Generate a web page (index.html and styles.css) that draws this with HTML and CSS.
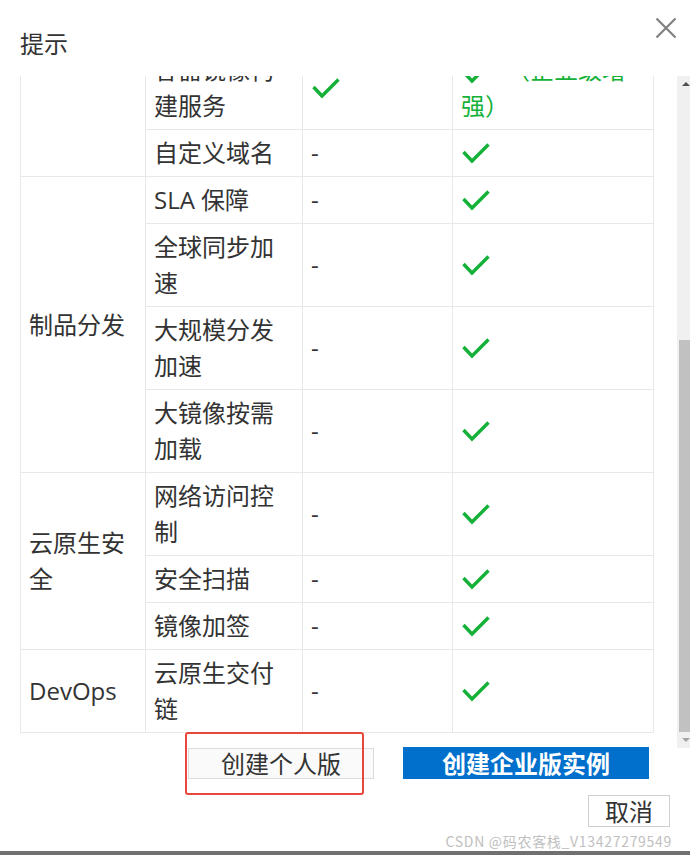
FILE: index.html
```html
<!DOCTYPE html>
<html lang="zh-CN">
<head>
<meta charset="utf-8">
<title>提示</title>
<link rel="stylesheet" href="styles.css">
</head>
<body>
<div class="dialog">
  <div class="header">
    <div class="title">提示</div>
    <svg class="close" width="22" height="22" viewBox="0 0 22 22"><path d="M1.5 1.5 L20.5 20.5 M20.5 1.5 L1.5 20.5" stroke="#808080" stroke-width="2.2" fill="none"/></svg>
  </div>
  <div class="body">
    <div class="viewport">
      <table class="grid">
        <colgroup><col class="c1"><col class="c2"><col class="c3"><col class="c4"></colgroup>
        <tr><td rowspan="2"></td><td>容器镜像构建服务</td><td><svg class="ok" width="28" height="22" viewBox="0 0 28 22"><polyline points="1.5,10 10,19 26.5,2.5" fill="none" stroke="#14b037" stroke-width="3.4"/></svg></td><td class="green"><svg class="ok-inline" width="28" height="22" viewBox="0 0 28 22"><polyline points="1.5,10 10,19 26.5,2.5" fill="none" stroke="#14b037" stroke-width="3.4"/></svg>（企业级增强）</td></tr>
        <tr><td>自定义域名</td><td>-</td><td><svg class="ok" width="28" height="22" viewBox="0 0 28 22"><polyline points="1.5,10 10,19 26.5,2.5" fill="none" stroke="#14b037" stroke-width="3.4"/></svg></td></tr>
        <tr><td rowspan="4">制品分发</td><td>SLA 保障</td><td>-</td><td><svg class="ok" width="28" height="22" viewBox="0 0 28 22"><polyline points="1.5,10 10,19 26.5,2.5" fill="none" stroke="#14b037" stroke-width="3.4"/></svg></td></tr>
        <tr><td>全球同步加速</td><td>-</td><td><svg class="ok" width="28" height="22" viewBox="0 0 28 22"><polyline points="1.5,10 10,19 26.5,2.5" fill="none" stroke="#14b037" stroke-width="3.4"/></svg></td></tr>
        <tr><td>大规模分发加速</td><td>-</td><td><svg class="ok" width="28" height="22" viewBox="0 0 28 22"><polyline points="1.5,10 10,19 26.5,2.5" fill="none" stroke="#14b037" stroke-width="3.4"/></svg></td></tr>
        <tr><td>大镜像按需加载</td><td>-</td><td><svg class="ok" width="28" height="22" viewBox="0 0 28 22"><polyline points="1.5,10 10,19 26.5,2.5" fill="none" stroke="#14b037" stroke-width="3.4"/></svg></td></tr>
        <tr><td rowspan="3">云原生安全</td><td>网络访问控制</td><td>-</td><td><svg class="ok" width="28" height="22" viewBox="0 0 28 22"><polyline points="1.5,10 10,19 26.5,2.5" fill="none" stroke="#14b037" stroke-width="3.4"/></svg></td></tr>
        <tr><td>安全扫描</td><td>-</td><td><svg class="ok" width="28" height="22" viewBox="0 0 28 22"><polyline points="1.5,10 10,19 26.5,2.5" fill="none" stroke="#14b037" stroke-width="3.4"/></svg></td></tr>
        <tr><td>镜像加签</td><td>-</td><td><svg class="ok" width="28" height="22" viewBox="0 0 28 22"><polyline points="1.5,10 10,19 26.5,2.5" fill="none" stroke="#14b037" stroke-width="3.4"/></svg></td></tr>
        <tr><td>DevOps</td><td>云原生交付链</td><td>-</td><td><svg class="ok" width="28" height="22" viewBox="0 0 28 22"><polyline points="1.5,10 10,19 26.5,2.5" fill="none" stroke="#14b037" stroke-width="3.4"/></svg></td></tr>
      </table>
    </div>
    <div class="scrollbar">
      <div class="sb-btn"><span class="arrow-up"></span></div>
      <div class="sb-track"><div class="sb-thumb"></div></div>
      <div class="sb-btn"><span class="arrow-down"></span></div>
    </div>
  </div>
  <div class="actions">
    <button class="btn btn-plain">创建个人版</button>
    <button class="btn btn-primary">创建企业版实例</button>
    <div class="mark"></div>
  </div>
  <div class="footer">
    <button class="btn btn-cancel">取消</button>
  </div>
  <div class="watermark">CSDN @码农客栈_V13427279549</div>
  <div class="bottom-bar"></div>
</div>
</body>
</html>
```
FILE: styles.css
```css
* { box-sizing: border-box; }
html, body { margin: 0; padding: 0; background: #fff; }
body {
  font-family: "Open Sans", "Noto Sans CJK SC", sans-serif;
  color: #333;
}
.dialog {
  width: 690px;
  height: 855px;
  display: flex;
  flex-direction: column;
  overflow: hidden;
}
.header {
  height: 76px;
  flex-shrink: 0;
  display: flex;
  justify-content: space-between;
  align-items: flex-start;
}
.title {
  margin: 26px 0 0 20px;
  font-size: 24px;
  line-height: 36px;
  color: #333;
}
.close {
  margin: 17px 13px 0 0;
}
.body {
  height: 671px;
  flex-shrink: 0;
  display: flex;
}
.viewport {
  flex: 1;
  overflow: hidden;
  display: flex;
  flex-direction: column;
  justify-content: flex-end;
  padding: 0 0 14px 20px;
}
.grid {
  flex-shrink: 0;
  width: 633px;
  table-layout: fixed;
  border-collapse: collapse;
  font-size: 24px;
  line-height: 36px;
  color: #333;
}
.c1 { width: 125px; }
.c2 { width: 157px; }
.c3 { width: 150px; }
.c4 { width: 201px; }
.grid td {
  border: 1px solid #e8e8e8;
  padding: 5px 8px;
  vertical-align: middle;
}
.ok { display: block; margin-left: 1px; }
.ok-inline { vertical-align: middle; margin: 0 16px 0 1px; }
.green { color: #14b037; }
.scrollbar {
  width: 13px;
  height: 672px;
  background: #f0f0f0;
  display: flex;
  flex-direction: column;
  flex-shrink: 0;
}
.sb-btn {
  height: 16px;
  flex-shrink: 0;
  display: flex;
  align-items: center;
  justify-content: center;
  padding-left: 4px;
}
.arrow-up {
  width: 0; height: 0;
  border-left: 4px solid transparent;
  border-right: 4px solid transparent;
  border-bottom: 4px solid #505050;
}
.arrow-down {
  width: 0; height: 0;
  border-left: 4px solid transparent;
  border-right: 4px solid transparent;
  border-top: 4px solid #a3a3a3;
}
.sb-track {
  flex: 1;
  display: flex;
  flex-direction: column;
  justify-content: flex-end;
}
.sb-thumb {
  height: 392px;
  margin-left: 2px;
  background: #c1c1c1;
}
.actions {
  position: relative;
  height: 32px;
  flex-shrink: 0;
  display: flex;
  align-items: center;
  padding-left: 188px;
  gap: 29px;
}
.btn {
  font-family: "Noto Sans CJK SC", sans-serif;
  font-size: 24px;
  line-height: 28px;
  padding: 0;
  margin: 0;
  border-radius: 0;
  cursor: pointer;
}
.btn-plain {
  width: 186px;
  height: 31px;
  background: #fafafa;
  border: 1px solid #dcdcdc;
  color: #333;
}
.btn-primary {
  width: 246px;
  height: 32px;
  background: #0070cc;
  border: none;
  color: #fff;
  font-weight: 600;
}
.mark {
  position: absolute;
  left: 185px;
  top: -15px;
  width: 179px;
  height: 63px;
  border: 2.5px solid #e8483b;
  border-radius: 3px;
  pointer-events: none;
}
.footer {
  margin-top: 16px;
  height: 32px;
  flex-shrink: 0;
  display: flex;
  justify-content: flex-end;
  padding-right: 20px;
}
.btn-cancel {
  width: 82px;
  height: 32px;
  background: #fff;
  border: 1px solid #cfcfcf;
  color: #333;
}
.watermark {
  margin-top: 6px;
  height: 16px;
  flex-shrink: 0;
  text-align: right;
  padding-right: 18px;
  font-family: "Noto Sans CJK SC", sans-serif;
  font-size: 14px;
  line-height: 16px;
  letter-spacing: 0.7px;
  color: #c0c0c0;
}
.bottom-bar {
  margin-top: 2px;
  height: 4px;
  flex-shrink: 0;
  background: #707070;
}
```
